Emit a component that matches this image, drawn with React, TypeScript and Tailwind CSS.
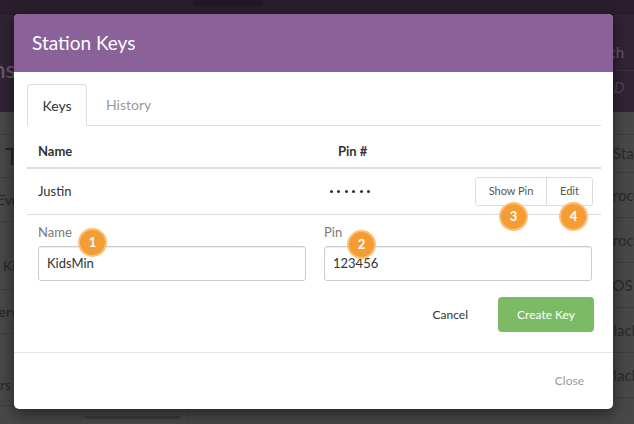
export default function App() {
  const leftRow = "border-b border-[#3f3f3f] flex items-center text-[14px] text-[#262626] whitespace-nowrap overflow-hidden";
  const rightRow = "border-b border-[#3f3f3f] flex items-center pl-[425px] text-[15px] text-[#2a2a2a] whitespace-nowrap overflow-hidden";
  return (
    <div className="relative w-[634px] h-[424px] overflow-hidden bg-[#484848] font-['Lato','Noto_Sans',sans-serif]">
      {/* dimmed page behind the dialog */}
      <div className="flex flex-col h-full">
        <div className="h-[15px] shrink-0 bg-[#2b1e2c] flex">
          <div className="ml-[193px] w-[70px] h-[7px] rounded-b-[6px] bg-[#231825]" />
        </div>
        <div className="h-[97px] shrink-0 bg-[#312334] flex">
          <div className="w-[188px] shrink-0 flex flex-col">
            <div className="w-[16px] mt-[40px] flex justify-end overflow-hidden whitespace-nowrap text-[24px] leading-[28px] text-[#6b5d6e]">Stations</div>
          </div>
          <div className="flex-1 min-w-0 flex flex-col">
            <div className="h-[55px] w-[436px] pt-[28px] flex justify-end text-[15px] leading-[18px] text-[#6a5b6c] whitespace-nowrap overflow-hidden">Search</div>
            <div className="border-t border-[#3e2f41] pl-[426px] pt-[5px] text-[15px] italic text-[#524455] whitespace-nowrap overflow-hidden">D</div>
          </div>
        </div>
        <div className="flex-1 flex">
          <div className="w-[188px] shrink-0 border-r border-[#3f3f3f] flex flex-col">
            <div className="h-[23px] border-b border-[#3f3f3f]" />
            <div className={leftRow + " h-[43px] text-[24px]"}><span className="ml-[5px]">Tags</span></div>
            <div className={leftRow + " h-[44px]"}><span className="ml-[-3px]">Events</span></div>
            <div className={leftRow + " h-[68px]"}><span className="ml-[3px] pt-[20px]">Kids</span></div>
            <div className={leftRow + " h-[44px]"}><span className="ml-[-9px]">Services</span></div>
            <div className={leftRow + " h-[72px]"}>
              <div className="w-[11px] flex justify-end overflow-hidden pt-[30px]">Volunteers</div>
            </div>
            <div className="ml-[85px] w-[95px] h-[3px] mt-[10px] bg-[#3a3a3a]" />
          </div>
          <div className="flex-1 min-w-0 flex flex-col">
            <div className="h-[23px] border-b border-[#3f3f3f]" />
            <div className={rightRow + " h-[38px]"}><span>Status</span></div>
            <div className={rightRow + " h-[45px]"}><span className="ml-[-9px]">Processed</span></div>
            <div className={rightRow + " h-[45px]"}><span className="ml-[-9px]">Processed</span></div>
            <div className={rightRow + " h-[45px]"}><span className="ml-[-4px]">iOS</span></div>
            <div className={rightRow + " h-[45px]"}><span className="ml-[-9px]">Black</span></div>
            <div className={rightRow + " h-[45px]"}><span className="ml-[-9px]">Black</span></div>
          </div>
        </div>
      </div>

      {/* dialog */}
      <div className="absolute left-[14px] top-[14px] w-[599px] h-[395px] bg-white rounded-[5px] shadow-[0_5px_15px_rgba(0,0,0,0.5)] flex flex-col overflow-hidden">
        <div className="h-[58px] shrink-0 bg-[#8a6198] flex items-center pl-[18px] text-white text-[19px]">Station Keys</div>
        <div className="h-[280px] shrink-0 pr-[12px] pl-[13px] pt-[12px] flex flex-col">
          <div className="h-[42px] border-b border-[#dddddd] flex">
            <div className="w-[60px] h-[42px] border border-[#dddddd] border-b-white rounded-t-[4px] bg-white flex items-center justify-center text-[14px] text-[#333333]">Keys</div>
            <div className="ml-[4px] px-[15px] flex items-center text-[14px] text-[#999999]">History</div>
          </div>
          <div className="h-[43px] border-b-2 border-[#dddddd] flex text-[13px] font-bold text-[#333333] leading-[16px] pt-[17px]">
            <div className="w-[311px] pl-[11px]">Name</div>
            <div>Pin #</div>
          </div>
          <div className="h-[46px] border-b border-[#dddddd] flex items-center text-[13px] text-[#333333]">
            <div className="w-[311px] pl-[11px]">Justin</div>
            <div className="ml-[-8px] flex gap-[4.4px]">
              {[0, 1, 2, 3, 4, 5].map((i) => (
                <span key={i} className="w-[3px] h-[3px] rounded-full bg-[#333333]" />
              ))}
            </div>
            <div className="ml-auto mr-[8px] flex h-[29px] border border-[#dddddd] rounded-[3px] text-[11px] text-[#555555]">
              <div className="w-[71px] flex items-center justify-center border-r border-[#dddddd]">Show Pin</div>
              <div className="w-[45px] flex items-center justify-center">Edit</div>
            </div>
          </div>
          <div className="ml-[11px] grid grid-cols-[268px_268px] gap-x-[18px] mt-[9px]">
            <div className="flex flex-col">
              <label className="text-[13px] leading-[16px] text-[#777777]">Name</label>
              <div className="mt-[6px] h-[35px] border border-[#cccccc] rounded-[3px] shadow-[inset_0_1px_1px_rgba(0,0,0,0.075)] flex items-center pl-[8px] text-[13px] text-[#333333]">KidsMin</div>
            </div>
            <div className="flex flex-col">
              <label className="text-[13px] leading-[16px] text-[#777777]">Pin</label>
              <div className="mt-[6px] h-[35px] border border-[#cccccc] rounded-[3px] shadow-[inset_0_1px_1px_rgba(0,0,0,0.075)] flex items-center pl-[8px] text-[13px] text-[#333333]">123456</div>
            </div>
          </div>
          <div className="mt-[16px] flex justify-end items-center pr-[7px]">
            <div className="text-[12px] text-[#333333] mr-[30px]">Cancel</div>
            <div className="w-[96px] h-[35px] rounded-[4px] bg-[#7cba66] flex items-center justify-center text-[12px] text-white">Create Key</div>
          </div>
        </div>
        <div className="flex-1 border-t border-[#e5e5e5] flex items-center justify-end pr-[29px] text-[12px] text-[#999999]">Close</div>

        {/* numbered callouts */}
        <div className="absolute left-[64px] top-[214px] w-[29px] h-[29px] rounded-full bg-[#f59d35] border-2 border-[#f8c27c] flex items-center justify-center text-white text-[13px] font-bold">1</div>
        <div className="absolute left-[333px] top-[216px] w-[29px] h-[29px] rounded-full bg-[#f59d35] border-2 border-[#f8c27c] flex items-center justify-center text-white text-[13px] font-bold">2</div>
        <div className="absolute left-[485px] top-[188px] w-[29px] h-[29px] rounded-full bg-[#f59d35] border-2 border-[#f8c27c] flex items-center justify-center text-white text-[13px] font-bold">3</div>
        <div className="absolute left-[545px] top-[188px] w-[29px] h-[29px] rounded-full bg-[#f59d35] border-2 border-[#f8c27c] flex items-center justify-center text-white text-[13px] font-bold">4</div>
      </div>
    </div>
  );
}
